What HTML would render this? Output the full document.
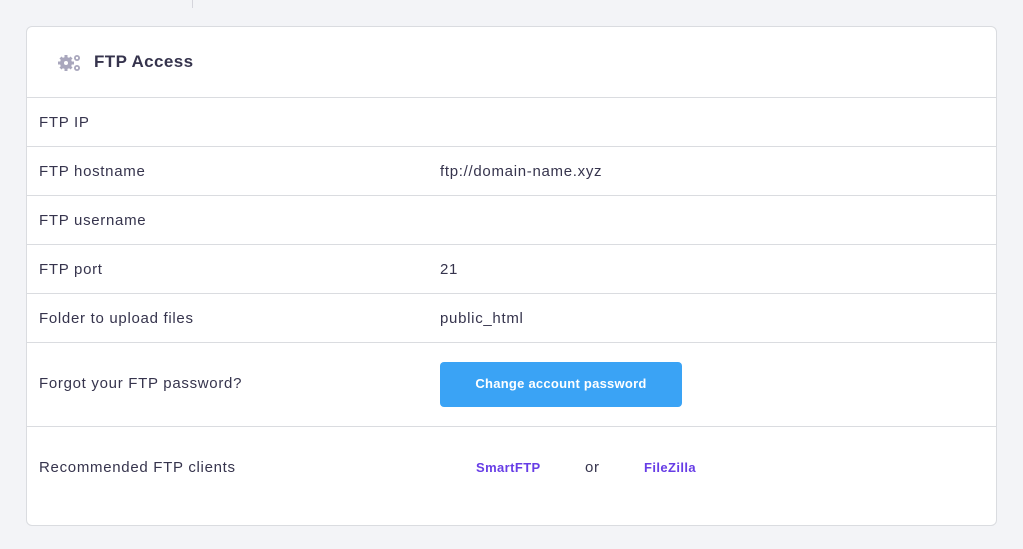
<!DOCTYPE html>
<html><head><style>
body{margin:0;background:#f3f4f7;width:1023px;height:549px;overflow:hidden;font-family:"Liberation Sans",sans-serif;color:#36344d;position:relative}
.vl{position:absolute;left:192px;top:0;width:1px;height:8px;background:#d5d5dc}
.card{position:absolute;left:26px;top:26px;width:969px;height:498px;background:#fff;border:1px solid #dadce0;border-radius:6px;overflow:hidden}
.hd{height:70px;border-bottom:1px solid #dadce0;position:relative}
.hd svg{position:absolute;left:31px;top:26px}
.hd span{position:absolute;left:67px;top:25px;font-size:17px;font-weight:bold;color:#36344d;letter-spacing:0.4px}
.row{height:48px;border-bottom:1px solid #dadce0;position:relative;font-size:15px;letter-spacing:0.7px}
.row .l{position:absolute;left:12px;top:16px}
.row .v{position:absolute;left:413px;top:16px}
.btn{position:absolute;left:413px;top:19px;width:242px;height:45px;background:#3aa3f5;border-radius:4px;color:#fff;font-weight:bold;font-size:13px;text-align:center;line-height:43px;letter-spacing:0.25px}
a{color:#673de6;font-weight:bold;font-size:13px;text-decoration:none;position:absolute;top:33px;letter-spacing:0.4px}
</style></head><body>
<div class="vl"></div>
<div class="card">
<div class="hd"><svg width="24" height="20" viewBox="0 0 24 20"><g fill="#a9a7bd"><circle cx="8" cy="10" r="6"/><g stroke="#a9a7bd" stroke-width="3"><line x1="8" y1="2" x2="8" y2="18"/><line x1="0" y1="10" x2="16" y2="10"/><line x1="2.5" y1="4.5" x2="13.5" y2="15.5"/><line x1="13.5" y1="4.5" x2="2.5" y2="15.5"/></g><circle cx="8" cy="10" r="2" fill="#fff"/><circle cx="19" cy="5" r="3"/><circle cx="19" cy="15" r="3"/><circle cx="19" cy="5" r="1.2" fill="#fff"/><circle cx="19" cy="15" r="1.2" fill="#fff"/></g></svg><span>FTP Access</span></div>
<div class="row"><span class="l">FTP IP</span></div>
<div class="row"><span class="l">FTP hostname</span><span class="v">ftp://domain-name.xyz</span></div>
<div class="row"><span class="l">FTP username</span></div>
<div class="row"><span class="l">FTP port</span><span class="v">21</span></div>
<div class="row"><span class="l">Folder to upload files</span><span class="v">public_html</span></div>
<div class="row" style="height:83px"><span class="l" style="top:32px">Forgot your FTP password?</span><div class="btn">Change account password</div></div>
<div class="row" style="border:none;height:98px"><span class="l" style="top:32px">Recommended FTP clients</span><a style="left:449px">SmartFTP</a><span class="v" style="left:558px;top:32px">or</span><a style="left:617px">FileZilla</a></div>
</div>
</body></html>
